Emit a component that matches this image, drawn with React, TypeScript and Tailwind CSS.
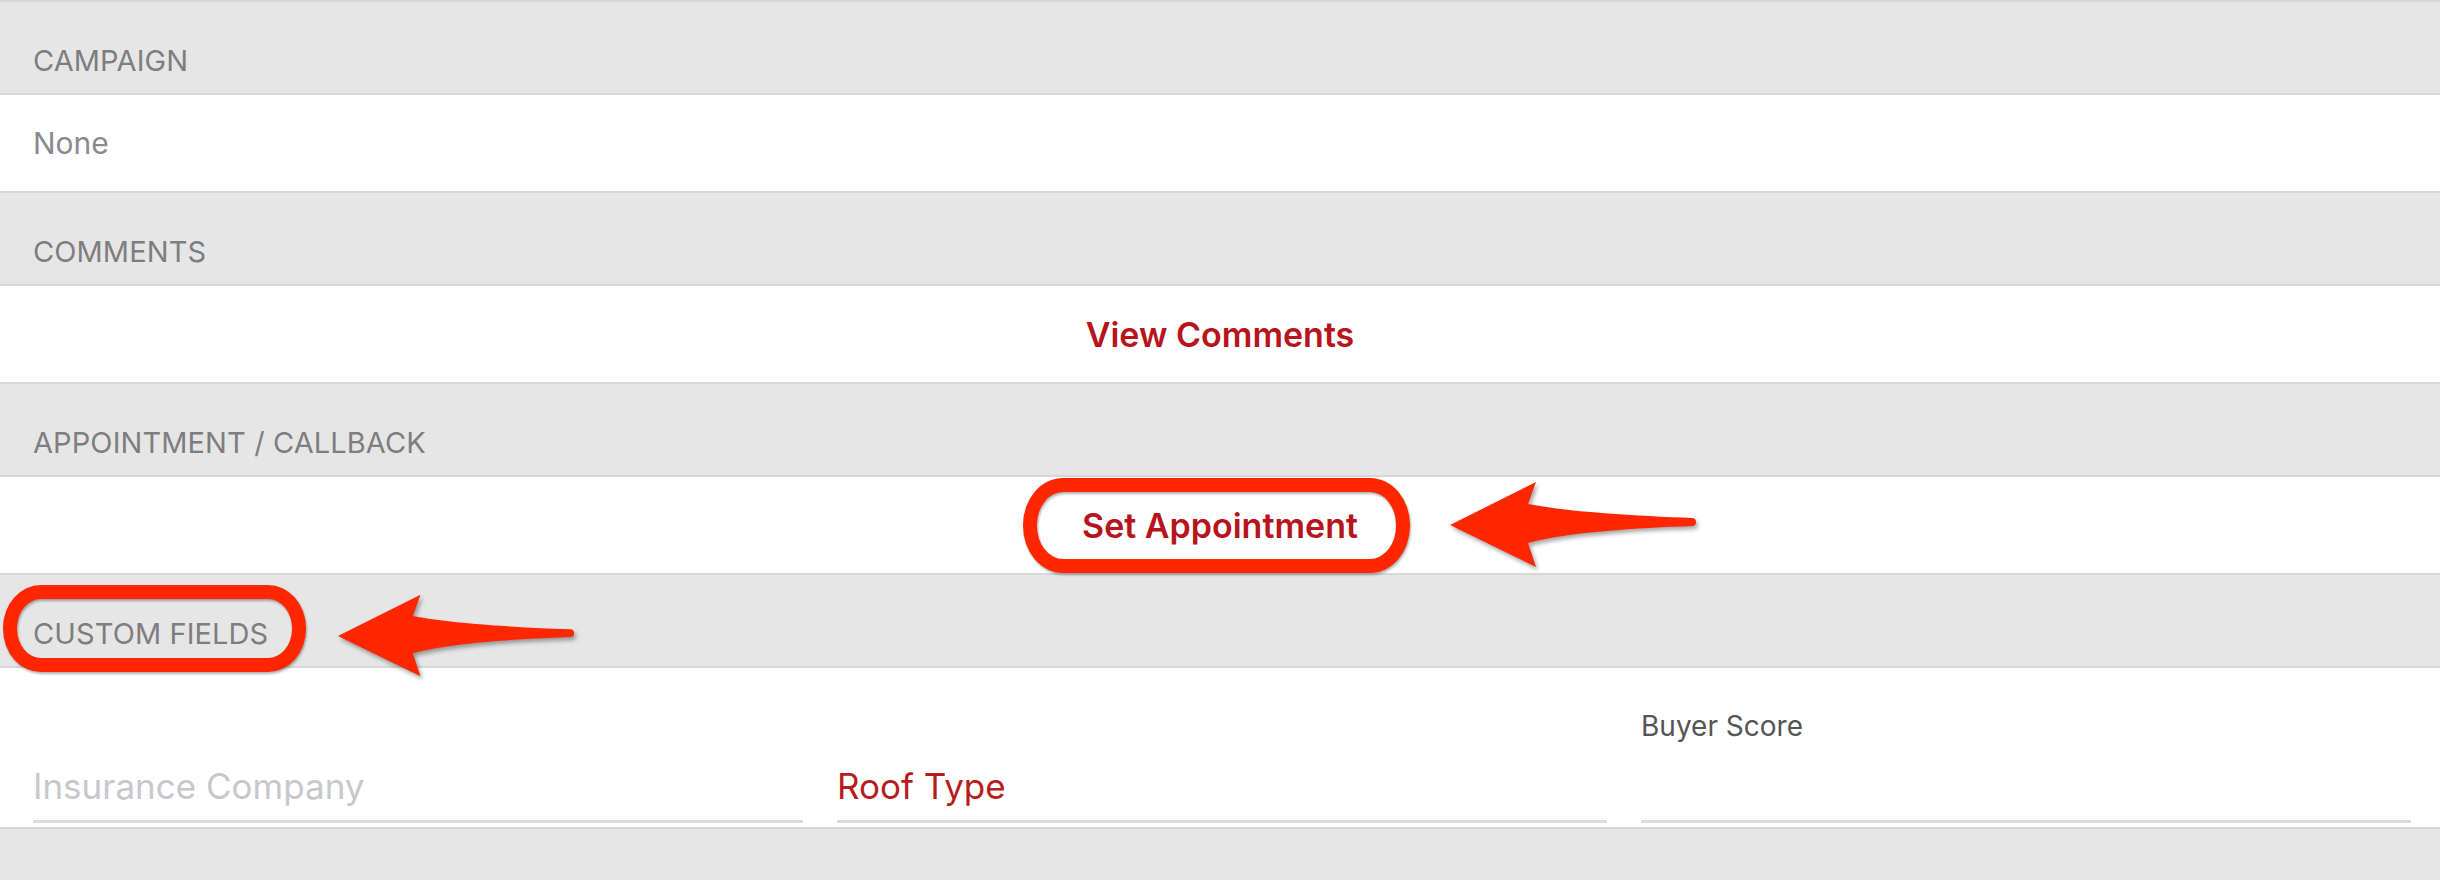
import React from "react";

function SectionHeader({ title }: { title: string }) {
  return (
    <div className="h-[93px] bg-[#e6e6e6] border-b-2 border-[#d8d8d8] flex items-center pt-[26px] pl-[33px]">
      <span className="text-[29px] tracking-[0.1px] text-[#7e7e80] leading-none">
        {title}
      </span>
    </div>
  );
}

function Arrow({ className }: { className: string }) {
  return (
    <svg
      viewBox="0 0 250 92"
      preserveAspectRatio="none"
      className={`absolute drop-shadow-[2px_3px_2px_rgba(0,0,0,0.35)] ${className}`}
    >
      <path
        d="M2,46 L88,3 L80,25 C120,33 190,37 244,39 A4,4 0 0 1 244,47 C190,49 120,53 80,64 L88,88 Z"
        fill="#ff2600"
      />
    </svg>
  );
}

function Field({
  label,
  value,
  placeholder,
}: {
  label?: string;
  value?: string;
  placeholder?: string;
}) {
  return (
    <div className="flex flex-col justify-end">
      {label && (
        <div className="text-[28px] leading-[33px] text-[#555555] mb-[22px]">
          {label}
        </div>
      )}
      <div className="h-[42px] text-[35px] leading-[42px] mb-[13px]">
        {value ? (
          <span className="text-[#b71c1c]">{value}</span>
        ) : (
          <span className="text-[#c7c7cc]">{placeholder}</span>
        )}
      </div>
      <div className="h-[3px] bg-[#dcdcdc]" />
    </div>
  );
}

export default function App() {
  return (
    <div className="relative w-[2440px] h-[880px] bg-[#e6e6e6] border-t-2 border-[#d6d6d6] font-['Inter',sans-serif] overflow-hidden">
      <SectionHeader title="CAMPAIGN" />
      <div className="h-[98px] bg-white border-b-2 border-[#d8d8d8] flex items-center pl-[33px]">
        <span className="text-[30px] text-[#8a8a8e]">None</span>
      </div>

      <SectionHeader title="COMMENTS" />
      <div className="h-[98px] bg-white border-b-2 border-[#d8d8d8] flex items-center justify-center">
        <span className="text-[34px] font-semibold text-[#b8141c]">View Comments</span>
      </div>

      <SectionHeader title="APPOINTMENT / CALLBACK" />
      <div className="h-[98px] bg-white border-b-2 border-[#d8d8d8] flex items-center justify-center">
        <span className="text-[34px] font-semibold text-[#b8141c]">Set Appointment</span>
      </div>

      <SectionHeader title="CUSTOM FIELDS" />
      <div className="h-[161px] bg-white border-b-2 border-[#d8d8d8] grid grid-cols-3 gap-[34px] pl-[33px] pr-[29px] pb-[4px] items-end">
        <Field placeholder="Insurance Company" />
        <Field value="Roof Type" />
        <Field label="Buyer Score" />
      </div>

      {/* annotations */}
      <div className="absolute left-[1023px] top-[476px] w-[387px] h-[95px] border-[14px] border-[#ff2600] rounded-[40px/47px] drop-shadow-[1px_2px_1px_rgba(0,0,0,0.3)]" />
      <Arrow className="left-[1448px] top-[477px] w-[250px] h-[92px]" />

      <div className="absolute left-[3px] top-[583px] w-[303px] h-[87px] border-[14px] border-[#ff2600] rounded-[38px/43px] drop-shadow-[1px_2px_1px_rgba(0,0,0,0.3)]" />
      <Arrow className="left-[336px] top-[590px] w-[240px] h-[88px]" />
    </div>
  );
}
